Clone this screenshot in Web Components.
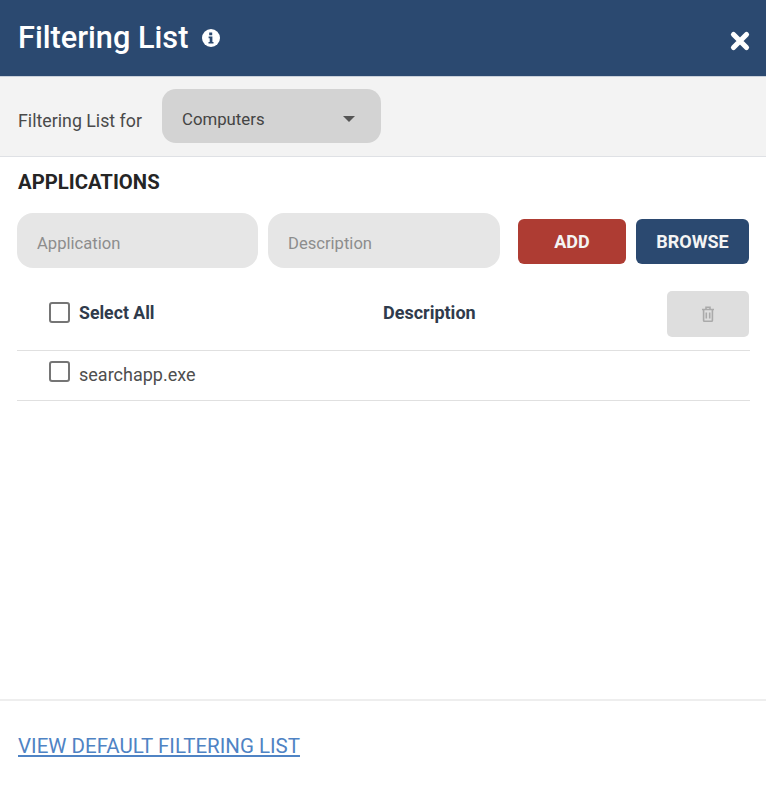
<!DOCTYPE html>
<html>
<head>
<meta charset="utf-8">
<title>Filtering List</title>
<style>
	html, body { margin: 0; padding: 0; background: #fff; }
	body { font-family: Roboto, "Liberation Sans", sans-serif; }
</style>
</head>
<body>
<filter-panel></filter-panel>
<script>
class FlCheckbox extends HTMLElement {
	constructor() {
		super();
		this.attachShadow({ mode: "open" }).innerHTML = `
			<style>
				:host { display: block; box-sizing: border-box; width: 21px; height: 21px; border: 2px solid #757575; border-radius: 3px; background: #fff; }
			</style>`;
	}
}

class FlInput extends HTMLElement {
	constructor() {
		super();
		this.attachShadow({ mode: "open" }).innerHTML = `
			<style>
				:host { display: flex; align-items: center; box-sizing: border-box; height: 55px; padding: 6px 20px 0; background: #e6e6e6; border-radius: 16px; color: #8d8d8d; font-size: 16.6px; }
			</style>
			<slot></slot>`;
	}
}

class FlButton extends HTMLElement {
	constructor() {
		super();
		this.attachShadow({ mode: "open" }).innerHTML = `
			<style>
				:host { display: flex; align-items: center; justify-content: center; box-sizing: border-box; height: 45px; border-radius: 6px; color: #f4f4f4; font-size: 18px; font-weight: 700; background: var(--bg, #2b4970); }
			</style>
			<slot></slot>`;
	}
}

class FlSelect extends HTMLElement {
	constructor() {
		super();
		this.attachShadow({ mode: "open" }).innerHTML = `
			<style>
				:host { display: flex; align-items: center; justify-content: space-between; box-sizing: border-box; width: 219px; height: 54px; padding: 6px 26px 0 20px; background: #d3d3d3; border-radius: 14px; color: #444; font-size: 16.8px; }
				i { display: block; width: 0; height: 0; margin-top: -1px; border: 6.5px solid transparent; border-top: 6px solid #555; border-bottom: 0; }
			</style>
			<slot></slot><i></i>`;
	}
}

class FilterPanel extends HTMLElement {
	constructor() {
		super();
		this.attachShadow({ mode: "open" }).appendChild(this._getTemplate().content.cloneNode(true));
	}

	_getTemplate() {
		const template = document.createElement("template");

		template.innerHTML = `
			<style>
				:host { display: flex; flex-direction: column; box-sizing: border-box; width: 766px; height: 794px; background: #fff; }
				header { display: flex; align-items: center; box-sizing: border-box; height: 77px; padding: 0 15px 0 18px; background: #2b4970; border-bottom: 1px solid #c9d0da; color: #fff; }
				h1 { margin: 0 14px 0 0; font-size: 30.7px; line-height: 36px; font-weight: 500; }
				.close { margin-left: auto; margin-top: 5px; display: block; }
				.bar { display: flex; align-items: center; gap: 20px; box-sizing: border-box; height: 80px; padding: 0 18px 1px; background: #f3f3f3; border-bottom: 1px solid #dfe1e5; color: #4a4a4a; font-size: 17.8px; }
				.bar span { margin-top: 8px; }
				main { flex: 1; padding: 0 16px 0 17px; }
				h2 { margin: 14px 0 0 1px; font-size: 20.3px; line-height: 23px; font-weight: 700; color: #252525; }
				.form { display: flex; align-items: center; margin-top: 19px; }
				.form fl-input:nth-child(1) { width: 241px; }
				.form fl-input:nth-child(2) { margin-left: 10px; width: 232px; }
				.form fl-button { margin-top: 1px; }
				.form fl-button:nth-child(3) { margin-left: 18px; width: 108px; --bg: #ae3c33; }
				.form fl-button:nth-child(4) { margin-left: 10px; width: 113px; }
				.row { display: grid; align-items: center; box-sizing: border-box; padding-left: 32px; border-bottom: 1px solid #e0e0e0; }
				.head { grid-template-columns: 30px 304px 1fr 82px; height: 71px; margin-top: 12px; padding-right: 1px; font-size: 17.7px; font-weight: 700; color: #2f3b4c; }
				.head span { margin-top: -4px; }
				.head .desc { font-size: 18px; margin-top: -6px; }
				.item { grid-template-columns: 30px 1fr; height: 50px; font-size: 18px; color: #4e4e4e; }
				.item span { margin-top: -3px; }
				.head fl-checkbox { margin-top: -5px; }
				.item fl-checkbox { margin-top: -8px; }
				.trash { display: flex; align-items: center; justify-content: center; width: 82px; height: 46px; margin-top: -3px; background: #dedede; border-radius: 5px; }
				footer { box-sizing: border-box; height: 95px; padding: 33px 18px 0; border-top: 2px solid #eee; }
				a { color: #4f83c4; font-size: 20.5px; line-height: 24px; text-decoration: underline; }
			</style>
			<header>
				<h1>Filtering List</h1>
				<svg width="18" height="18" viewBox="0 0 18 18"><circle cx="9" cy="9" r="9" fill="#fff"/><path d="M7.2 3.6h3v2.6h-3zM6.6 7.6h3.8v5.4h1.1v1.6H6.5V13h1.2V9.2H6.6z" fill="#2b4970"/></svg>
				<svg class="close" width="22" height="22" viewBox="0 0 22 22"><path d="M4.5 4.5l13 13M17.5 4.5l-13 13" stroke="#fff" stroke-width="5.2" stroke-linecap="round"/></svg>
			</header>
			<div class="bar">
				<span>Filtering List for</span>
				<fl-select>Computers</fl-select>
			</div>
			<main>
				<h2>APPLICATIONS</h2>
				<div class="form">
					<fl-input>Application</fl-input>
					<fl-input>Description</fl-input>
					<fl-button>ADD</fl-button>
					<fl-button>BROWSE</fl-button>
				</div>
				<div class="row head">
					<fl-checkbox></fl-checkbox>
					<span>Select All</span>
					<span class="desc">Description</span>
					<div class="trash">
						<svg width="14" height="16" viewBox="0 0 14 16" fill="none" stroke="#aaa" stroke-width="1.6"><path d="M1 3.5h12M5 3.2V1.3h4v1.9"/><path d="M2.6 4v10.4c0 .4.3.8.8.8h7.2c.5 0 .8-.4.8-.8V4"/><path d="M5.3 6.5v6M8.7 6.5v6"/></svg>
					</div>
				</div>
				<div class="row item">
					<fl-checkbox></fl-checkbox>
					<span>searchapp.exe</span>
				</div>
			</main>
			<footer><a href="#">VIEW DEFAULT FILTERING LIST</a></footer>
		`;

		return template;
	}
}

customElements.define("fl-checkbox", FlCheckbox);
customElements.define("fl-input", FlInput);
customElements.define("fl-button", FlButton);
customElements.define("fl-select", FlSelect);
customElements.define("filter-panel", FilterPanel);
</script>
</body>
</html>
